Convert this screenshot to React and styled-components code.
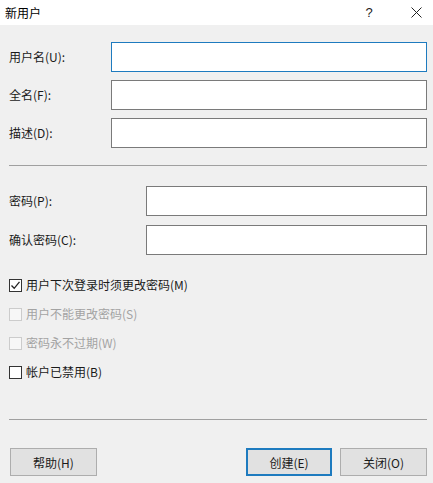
import styled, { createGlobalStyle } from 'styled-components';

const GlobalStyle = createGlobalStyle`
  html, body {
    margin: 0;
    padding: 0;
    background: #f0f0f0;
  }
  body {
    font-family: "Noto Sans CJK SC", "Noto Sans", "Liberation Sans", sans-serif;
    font-size: 12px;
    color: #1a1a1a;
  }
`;

const Window = styled.div`
  width: 433px;
  height: 483px;
  background: #f0f0f0;
  display: flex;
  flex-direction: column;
  overflow: hidden;
`;

const TitleBar = styled.div`
  height: 25px;
  background: #fff;
  display: flex;
  align-items: center;
  padding: 0 4px 0 5px;
  flex: 0 0 25px;
`;

const Title = styled.div`
  flex: 1;
  font-size: 12px;
  line-height: 16px;
  color: #000;
`;

const TitleButton = styled.div`
  width: ${(p) => p.w}px;
  display: flex;
  justify-content: center;
  align-items: center;
  font-family: "Liberation Sans", sans-serif;
  font-size: 13px;
  color: #222;
`;

const Body = styled.div`
  padding: 17px 6px 0 9px;
  display: flex;
  flex-direction: column;
`;

const FieldGroup = styled.div`
  display: flex;
  flex-direction: column;
  gap: ${(p) => p.gap}px;
`;

const Row = styled.div`
  display: grid;
  grid-template-columns: ${(p) => p.labelWidth}px 1fr;
  align-items: center;
`;

const Label = styled.label`
  line-height: 16px;
`;

const Input = styled.div`
  height: 30px;
  box-sizing: border-box;
  background: #fff;
  border: 1px solid ${(p) => (p.focused ? '#1e7bbf' : '#7a7a7a')};
`;

const Separator = styled.div`
  height: 1px;
  background: #a0a0a0;
  margin: ${(p) => p.mt}px 0 ${(p) => p.mb}px 0;
`;

const CheckList = styled.div`
  display: flex;
  flex-direction: column;
  gap: 9px;
  margin-top: 20px;
`;

const CheckRow = styled.div`
  height: 20px;
  display: flex;
  align-items: center;
  gap: 4px;
  color: ${(p) => (p.disabled ? '#a3a3a3' : '#1a1a1a')};
`;

const Box = styled.div`
  width: 13px;
  height: 13px;
  box-sizing: border-box;
  border: 1px solid ${(p) => (p.disabled ? '#cccccc' : '#333')};
  background: ${(p) => (p.disabled ? '#f7f7f7' : '#fff')};
  display: flex;
  align-items: center;
  justify-content: center;
`;

const CheckText = styled.span`
  line-height: 16px;
`;

const ButtonBar = styled.div`
  display: flex;
  align-items: center;
  gap: 8px;
  padding-left: 1px;
`;

const Button = styled.button`
  width: ${(p) => p.w}px;
  height: 28px;
  box-sizing: border-box;
  background: #e1e1e1;
  border: ${(p) => (p.primary ? '2px solid #1e7bbf' : '1px solid #adadad')};
  font-family: inherit;
  font-size: 12px;
  color: #1a1a1a;
  padding: 0;
  margin-left: ${(p) => (p.pushRight ? 'auto' : '0')};
`;

const Check = () => (
  <svg width="11" height="11" viewBox="0 0 11 11">
    <polyline points="1.5,5.5 4.2,8.3 9.5,1.8" fill="none" stroke="#222" strokeWidth="1.3" />
  </svg>
);

const Close = () => (
  <svg width="11" height="11" viewBox="0 0 11 11">
    <path d="M0.5 0.5 L10.5 10.5 M10.5 0.5 L0.5 10.5" stroke="#222" strokeWidth="1" />
  </svg>
);

const options = [
  { text: '用户下次登录时须更改密码(M)', checked: true },
  { text: '用户不能更改密码(S)', disabled: true },
  { text: '密码永不过期(W)', disabled: true },
  { text: '帐户已禁用(B)' },
];

const App = () => (
  <>
    <GlobalStyle />
    <Window>
      <TitleBar>
        <Title>新用户</Title>
        <TitleButton w={68}>?</TitleButton>
        <TitleButton w={26}>
          <Close />
        </TitleButton>
      </TitleBar>
      <Body>
        <FieldGroup gap={8}>
          <Row labelWidth={102}>
            <Label>用户名(U):</Label>
            <Input focused />
          </Row>
          <Row labelWidth={102}>
            <Label>全名(F):</Label>
            <Input />
          </Row>
          <Row labelWidth={102}>
            <Label>描述(D):</Label>
            <Input />
          </Row>
        </FieldGroup>
        <Separator mt={17} mb={20} />
        <FieldGroup gap={9}>
          <Row labelWidth={137}>
            <Label>密码(P):</Label>
            <Input />
          </Row>
          <Row labelWidth={137}>
            <Label>确认密码(C):</Label>
            <Input />
          </Row>
        </FieldGroup>
        <CheckList>
          {options.map((o) => (
            <CheckRow key={o.text} disabled={o.disabled}>
              <Box disabled={o.disabled}>{o.checked && <Check />}</Box>
              <CheckText>{o.text}</CheckText>
            </CheckRow>
          ))}
        </CheckList>
        <Separator mt={37} mb={28} />
        <ButtonBar>
          <Button w={87}>帮助(H)</Button>
          <Button w={86} primary pushRight>
            创建(E)
          </Button>
          <Button w={87}>关闭(O)</Button>
        </ButtonBar>
      </Body>
    </Window>
  </>
);

export default App;
